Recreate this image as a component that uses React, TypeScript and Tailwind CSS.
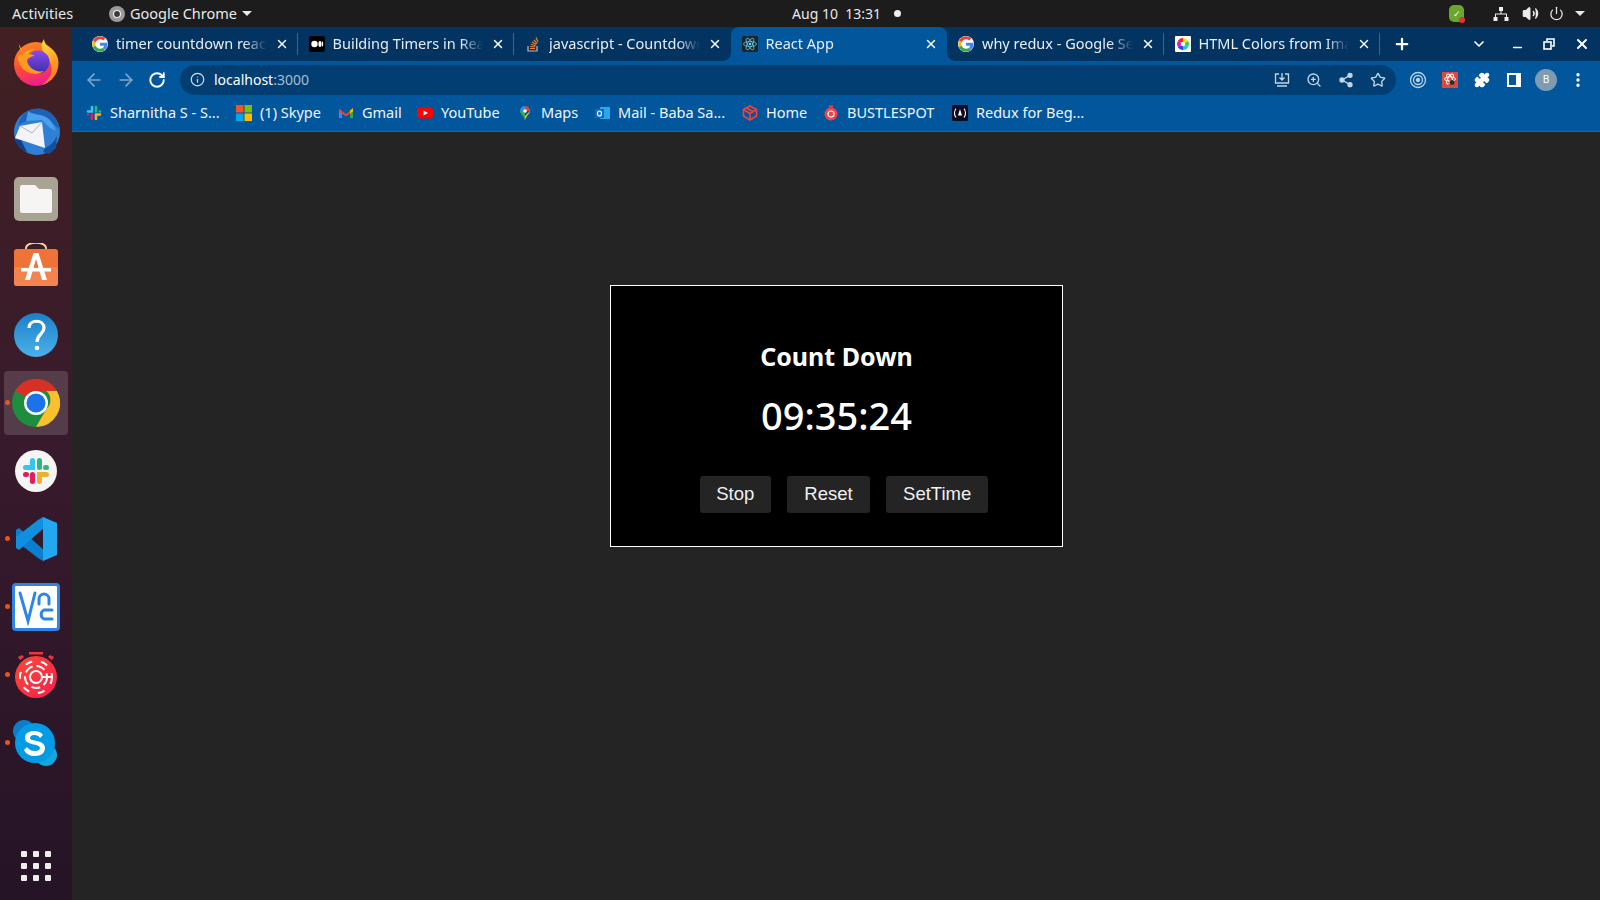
import { ArrowLeft, ArrowRight, RotateCw, Info, X, Plus, ChevronDown, Minus, Star, Share2, ZoomIn, EllipsisVertical, Puzzle, Volume2, Power } from 'lucide-react';

const sans = "font-['Noto_Sans','Open_Sans',sans-serif]";

function GoogleIcon() {
  return (
    <svg viewBox="0 0 48 48" className="w-4 h-4 shrink-0 bg-white rounded-full">
      <path fill="#ea4335" d="M24 9.500c3.900 0 7 1.400 9.500 3.700l6.600-6.600C36 2.800 30.500.5 24 .5 14.800.5 6.900 5.800 3 13.500l7.700 6C12.600 13.700 17.800 9.500 24 9.500z" />
      <path fill="#4285f4" d="M46.500 24.500c0-1.600-.1-3.100-.4-4.500H24v9h12.700c-.6 2.900-2.200 5.400-4.700 7l7.300 5.700c4.300-4 7.200-9.900 7.200-17.200z" />
      <path fill="#fbbc05" d="M10.700 28.500c-.5-1.400-.7-2.900-.7-4.500s.3-3.100.7-4.500l-7.700-6C1.400 16.700.5 20.200.5 24s.9 7.300 2.500 10.500l7.700-6z" />
      <path fill="#34a853" d="M24 47.500c6.500 0 11.900-2.100 15.300-5.800L32 36c-2 1.400-4.600 2.200-8 2.200-6.200 0-11.400-4.200-13.300-9.700l-7.700 6C6.900 42.200 14.800 47.500 24 47.500z" />
    </svg>
  );
}

function MediumIcon() {
  return (
    <svg viewBox="0 0 16 16" className="w-4 h-4 shrink-0">
      <rect width="16" height="16" rx="2" fill="#000" />
      <ellipse cx="5.500" cy="8" rx="3.200" ry="3.300" fill="#fff" />
      <ellipse cx="11" cy="8" rx="1.600" ry="3" fill="#fff" />
      <ellipse cx="13.600" cy="8" rx=".6" ry="2.700" fill="#fff" />
    </svg>
  );
}

function StackIcon() {
  return (
    <svg viewBox="0 0 16 16" className="w-4 h-4 shrink-0" fill="none">
      <path d="M3 10v5h9v-5" stroke="#bcbbbb" strokeWidth="1.200" />
      <path d="M5 12.500h5M5.200 10.500l5 .5M5.800 8.300l4.800 1.500M7 6l4.300 2.600M8.800 3.800l3.400 3.900M11 1.500l2 4.500" stroke="#f48024" strokeWidth="1.200" />
    </svg>
  );
}

function ReactIcon() {
  return (
    <svg viewBox="0 0 16 16" className="w-4 h-4 shrink-0">
      <rect width="16" height="16" rx="2" fill="#20232a" />
      <g fill="none" stroke="#61dafb" strokeWidth=".7">
        <ellipse cx="8" cy="8" rx="6.500" ry="2.500" />
        <ellipse cx="8" cy="8" rx="6.500" ry="2.500" transform="rotate(60 8 8)" />
        <ellipse cx="8" cy="8" rx="6.500" ry="2.500" transform="rotate(120 8 8)" />
      </g>
      <circle cx="8" cy="8" r="1.300" fill="#61dafb" />
    </svg>
  );
}

function ColorsIcon() {
  return (
    <svg viewBox="0 0 16 16" className="w-4 h-4 shrink-0">
      <rect width="16" height="16" rx="1" fill="#fff" />
      <path d="M8 8V2a6 6 0 0 1 5.200 3z" fill="#f5e50a" />
      <path d="M8 8l5.200-3a6 6 0 0 1 0 6z" fill="#2fd14a" />
      <path d="M8 8l5.200 3A6 6 0 0 1 8 14z" fill="#18c9d8" />
      <path d="M8 8v6a6 6 0 0 1-5.200-3z" fill="#2a45e8" />
      <path d="M8 8l-5.200 3a6 6 0 0 1 0-6z" fill="#c91fd6" />
      <path d="M8 8L2.800 5A6 6 0 0 1 8 2z" fill="#ee2424" />
      <circle cx="8" cy="8" r="2.200" fill="#fff" />
    </svg>
  );
}

function SlackSmall() {
  return (
    <svg viewBox="0 0 16 16" className="w-4 h-4 shrink-0" fill="none" strokeWidth="2.600" strokeLinecap="round">
      <path d="M6 2v4.500H2" stroke="#36c5f0" />
      <path d="M10 2v4.500M14 6.500h-.2" stroke="#2eb67d" />
      <path d="M10 14V9.500h4" stroke="#ecb22e" />
      <path d="M6 14V9.500M2 9.500h.2" stroke="#e01e5a" />
    </svg>
  );
}

function WindowsIcon() {
  return (
    <svg viewBox="0 0 16 16" className="w-4 h-4 shrink-0">
      <rect width="7.500" height="7.500" fill="#f35325" />
      <rect x="8.500" width="7.500" height="7.500" fill="#81bc06" />
      <rect y="8.500" width="7.500" height="7.500" fill="#05a6f0" />
      <rect x="8.500" y="8.500" width="7.500" height="7.500" fill="#ffba08" />
    </svg>
  );
}

function GmailIcon() {
  return (
    <svg viewBox="0 0 16 16" className="w-4 h-4 shrink-0">
      <path d="M1 4v9h3V7z" fill="#4285f4" />
      <path d="M15 4v9h-3V7z" fill="#34a853" />
      <path d="M1 3.500 8 9l7-5.500v3L8 11.500 1 6.500z" fill="#ea4335" />
      <path d="M12 5.500 15 3v3.500l-3 2z" fill="#fbbc05" />
    </svg>
  );
}

function YoutubeIcon() {
  return (
    <svg viewBox="0 0 16 16" className="w-4 h-4 shrink-0">
      <rect y="2.500" width="16" height="11" rx="3" fill="#ff0000" />
      <path d="M6.500 5.500v5L11 8z" fill="#fff" />
    </svg>
  );
}

function MapsIcon() {
  return (
    <svg viewBox="0 0 16 16" className="w-4 h-4 shrink-0">
      <path d="M8 1a5 5 0 0 0-5 5l5 0z" fill="#4285f4" />
      <path d="M8 1a5 5 0 0 1 5 5H8z" fill="#ea4335" />
      <path d="M13 6c0 2.500-3 4-5 9l-1-3z" fill="#fbbc05" />
      <path d="M3 6c0 2.500 3 4 5 9V6z" fill="#34a853" />
      <circle cx="8" cy="6" r="1.800" fill="#fff" />
    </svg>
  );
}

function OutlookIcon() {
  return (
    <svg viewBox="0 0 16 16" className="w-4 h-4 shrink-0">
      <rect x="6" y="2" width="10" height="12" fill="#28a8ea" />
      <rect x="1" y="4" width="9" height="9" fill="#0f6cbd" />
      <ellipse cx="5.500" cy="8.500" rx="2" ry="2.500" fill="none" stroke="#fff" strokeWidth="1.200" />
    </svg>
  );
}

function HomeCubeIcon() {
  return (
    <svg viewBox="0 0 16 16" className="w-4 h-4 shrink-0" fill="none" stroke="#f0403f" strokeWidth="1.600">
      <path d="M8 1 14.500 4.500v6.500L8 15 1.500 11V4.500z" />
      <path d="M1.500 4.500 8 8.500l6.500-4M8 8.500V15M4.500 3l6.500 3.500" />
    </svg>
  );
}

function BustleIcon() {
  return (
    <svg viewBox="0 0 16 16" className="w-4 h-4 shrink-0">
      <path d="M6 .5h4v2H6z" fill="#f0414c" />
      <circle cx="8" cy="9" r="6.500" fill="#f0414c" />
      <circle cx="8" cy="9" r="3" fill="none" stroke="#fff" strokeWidth="1.200" />
    </svg>
  );
}

function FreeCodeIcon() {
  return (
    <svg viewBox="0 0 16 16" className="w-4 h-4 shrink-0" fill="none" stroke="#fff" strokeWidth="1.100">
      <rect width="16" height="16" rx="1" fill="#0a0a23" stroke="none" />
      <path d="M4 3.500C2 6 2 10 4 12.500M12 3.500c2 2.500 2 6.500 0 9" />
      <path d="M8 4 6 10.500h4z" fill="#fff" stroke="none" />
    </svg>
  );
}

const tabs = [
  { title: 'timer countdown react', icon: <GoogleIcon />, active: false, sep: true },
  { title: 'Building Timers in React', icon: <MediumIcon />, active: false, sep: true },
  { title: 'javascript - Countdown', icon: <StackIcon />, active: false, sep: false },
  { title: 'React App', icon: <ReactIcon />, active: true, sep: false },
  { title: 'why redux - Google Search', icon: <GoogleIcon />, active: false, sep: true },
  { title: 'HTML Colors from Image', icon: <ColorsIcon />, active: false, sep: true },
];

function TabStrip() {
  return (
    <div className="h-[34px] bg-[#023361] flex items-end pl-[9px] shrink-0">
      {tabs.map((tab) => (
        <div
          key={tab.title}
          className={`relative h-[34px] w-[216.500px] flex items-center pl-[11px] pr-[9px] gap-[8px] rounded-t-[8px] ${
            tab.active ? 'bg-[#02569b]' : ''
          }`}
        >
          {tab.active && (
            <>
              <div className="absolute bottom-0 left-[-8px] w-[8px] h-[8px] bg-[radial-gradient(circle_at_0_0,#023361_7.500px,#02569b_8px)]" />
              <div className="absolute bottom-0 right-[-8px] w-[8px] h-[8px] bg-[radial-gradient(circle_at_100%_0,#023361_7.500px,#02569b_8px)]" />
            </>
          )}
          {tab.icon}
          <span className="flex-1 overflow-hidden whitespace-nowrap text-[14.500px] text-[#e6edf4] [mask-image:linear-gradient(to_right,black_85%,transparent)]">
            {tab.title}
          </span>
          <X size={14} strokeWidth={2.500} className="text-white shrink-0" />
          {tab.sep && <div className="absolute right-0 top-[6px] w-px h-[22px] bg-[#3a6690]" />}
        </div>
      ))}
      <div className="h-[34px] w-[43px] flex items-center justify-center">
        <Plus size={18} strokeWidth={3} className="text-white" />
      </div>
      <div className="flex-1 h-[34px] flex items-center justify-end pr-[1px] text-white">
        <div className="w-[32px] flex justify-center">
          <ChevronDown size={16} strokeWidth={2.500} />
        </div>
        <div className="w-[30px] ml-[7px] mr-[1px] flex justify-center">
          <Minus size={13} strokeWidth={3} className="mt-[6px]" />
        </div>
        <div className="w-[32px] flex justify-center">
          <svg viewBox="0 0 12 12" className="w-3 h-3" fill="none" stroke="#fff" strokeWidth="1.600">
            <rect x="1" y="4" width="7" height="7" />
            <path d="M4 3V1h7v7H9" />
          </svg>
        </div>
        <div className="w-[34px] flex justify-center">
          <X size={16} strokeWidth={3} />
        </div>
      </div>
    </div>
  );
}

function Toolbar() {
  return (
    <div className="h-[34px] bg-[#02569b] flex items-center pt-[3px] shrink-0">
      <div className="w-[108px] flex items-center pl-[12px] gap-[12px]">
        <ArrowLeft size={20} className="text-[#7ea6cc]" />
        <ArrowRight size={20} className="text-[#7ea6cc]" />
        <RotateCw size={18} strokeWidth={2.500} className="text-white" />
      </div>
      <div className="w-[1216px] h-[30px] rounded-full bg-[#033e72] flex items-center pl-[10px] pr-[10px]">
        <Info size={15} className="text-[#d5e0eb]" />
        <span className="ml-[9px] text-[14px] text-white">
          localhost<span className="text-[#a3bdd6]">:3000</span>
        </span>
        <div className="ml-auto flex items-center gap-[16px] text-[#c4d5e5]">
          <svg viewBox="0 0 16 16" className="w-4 h-4" fill="none" stroke="currentColor" strokeWidth="1.300">
            <path d="M5 2H1.500v9h13V2H11M8 1v7M5.500 5.500 8 8l2.500-2.500M3 14h10" />
          </svg>
          <ZoomIn size={16} />
          <Share2 size={16} fill="currentColor" />
          <Star size={16} strokeWidth={2} />
        </div>
      </div>
      <div className="flex-1 flex items-center pl-[6px] text-white">
        <div className="w-[32px] flex justify-center">
          <svg viewBox="0 0 18 18" className="w-[18px] h-[18px]" fill="none" stroke="#bcd0e3" strokeWidth="1.300">
            <circle cx="9" cy="9" r="7.500" />
            <circle cx="9" cy="9" r="4.500" />
            <circle cx="9" cy="9" r="1.500" fill="#bcd0e3" />
          </svg>
        </div>
        <div className="w-[32px] flex justify-center">
          <svg viewBox="0 0 16 16" className="w-4 h-4">
            <rect width="16" height="16" fill="#dc4a3d" />
            <g fill="none" stroke="#fff" strokeWidth=".9">
              <ellipse cx="8" cy="7" rx="5.500" ry="2.200" />
              <ellipse cx="8" cy="7" rx="5.500" ry="2.200" transform="rotate(60 8 7)" />
              <ellipse cx="8" cy="7" rx="5.500" ry="2.200" transform="rotate(120 8 7)" />
            </g>
            <circle cx="10" cy="10.500" r="2.500" fill="#3a2a2a" />
          </svg>
        </div>
        <div className="w-[32px] flex justify-center">
          <Puzzle size={16} fill="#fff" />
        </div>
        <div className="w-[32px] flex justify-center">
          <svg viewBox="0 0 14 14" className="w-[14px] h-[14px]">
            <path d="M0 0h14v14H0zM2 2v10h7V2z" fill="#fff" fillRule="evenodd" />
          </svg>
        </div>
        <div className="w-[32px] flex justify-center">
          <div className="w-[22px] h-[22px] rounded-full bg-[#7f9bb2] flex items-center justify-center text-[10px] text-white">
            B
          </div>
        </div>
        <div className="w-[32px] flex justify-center">
          <EllipsisVertical size={18} strokeWidth={2.500} />
        </div>
      </div>
    </div>
  );
}

const bookmarks = [
  { label: 'Sharnitha S - S...', icon: <SlackSmall />, width: 'w-[150px]' },
  { label: '(1) Skype', icon: <WindowsIcon />, width: 'w-[102px]' },
  { label: 'Gmail', icon: <GmailIcon />, width: 'w-[79px]' },
  { label: 'YouTube', icon: <YoutubeIcon />, width: 'w-[100px]' },
  { label: 'Maps', icon: <MapsIcon />, width: 'w-[77px]' },
  { label: 'Mail - Baba Sa...', icon: <OutlookIcon />, width: 'w-[148px]' },
  { label: 'Home', icon: <HomeCubeIcon />, width: 'w-[81px]' },
  { label: 'BUSTLESPOT', icon: <BustleIcon />, width: 'w-[129px]' },
  { label: 'Redux for Beg...', icon: <FreeCodeIcon />, width: 'w-[130px]' },
];

function BookmarkBar() {
  return (
    <div className="h-[37px] bg-[#02569b] border-b border-[#3f5f7c] flex items-center pl-[14px] shrink-0">
      {bookmarks.map((b) => (
        <div key={b.label} className={`${b.width} shrink-0 flex items-center gap-[8px]`}>
          {b.icon}
          <span className="text-[14.500px] text-[#f1f5f9] whitespace-nowrap">{b.label}</span>
        </div>
      ))}
    </div>
  );
}

function DockItem({ children, running, active }: { children: React.ReactNode; running?: boolean; active?: boolean }) {
  return (
    <div className="relative h-[68px] w-[72px] flex items-center justify-center">
      {active && <div className="absolute left-[4px] top-[2px] w-[64px] h-[64px] rounded-[4px] bg-white/15" />}
      {running && <div className="absolute left-[5px] top-[31px] w-[5px] h-[5px] rounded-full bg-[#e95420]" />}
      <div className="relative w-[48px] h-[48px]">{children}</div>
    </div>
  );
}

function Dock() {
  return (
    <div className="w-[72px] shrink-0 flex flex-col pt-[2px] bg-gradient-to-b from-[#422022] via-[#371a2c] to-[#251426]">
      <DockItem>
        <svg viewBox="0 0 48 48" className="w-full h-full">
          <defs>
            <linearGradient id="ff" x1="0.2" y1="0" x2="0.5" y2="1">
              <stop offset="0" stopColor="#ff8a1c" />
              <stop offset="0.55" stopColor="#ff4a3a" />
              <stop offset="1" stopColor="#ee1a92" />
            </linearGradient>
            <linearGradient id="ffy" x1="0" y1="0" x2="0.4" y2="1">
              <stop offset="0" stopColor="#ffe53a" />
              <stop offset="1" stopColor="#ff7a1a" />
            </linearGradient>
            <linearGradient id="ffp" x1="0.5" y1="0" x2="0.5" y2="1">
              <stop offset="0" stopColor="#8a4af0" />
              <stop offset="1" stopColor="#3a2fa8" />
            </linearGradient>
          </defs>
          <circle cx="24" cy="25" r="22" fill="url(#ff)" />
          <path d="M32 0c0 6 6 8 10 12 5 6 5 12 4 17-2 9-9 15-16 17 7-5 11-11 9-20-1-6-7-11-9-16-1-4 0-7 2-10z" fill="url(#ffy)" />
          <path d="M7 5c0 4 2 7 5 9 3-2 7-4 12-4-5 1-9 5-11 8z" fill="#ffb01f" />
          <circle cx="26" cy="23" r="11.500" fill="url(#ffp)" />
          <path d="M6 17c6-3 12-3 17 0-4 0-6 2-8 4 1 8 9 13 17 11-8 6-19 2-24-6-2-3-2-6-2-9z" fill="#ff9a1f" />
        </svg>
      </DockItem>
      <DockItem>
        <svg viewBox="0 0 48 48" className="w-full h-full">
          <circle cx="25" cy="25" r="23" fill="#2f7fd4" />
          <path d="M6 18C9 6 18 0 30 2c10 2 16 10 17 20l-9-8-12-2-14 3z" fill="#1c63b8" />
          <path d="M16 4c5 4 12 3 18 6 5 3 8 8 10 14l-6-3-8-8-16 1z" fill="#4aa0ea" />
          <path d="M33 41c5-2 9-6 12-12l-1 12-7 6-6-2z" fill="#15509f" />
          <path d="M2 32c3 7 8 12 13 13l-6-12z" fill="#123f8a" />
          <path d="M8 19 30 15l3 26L3 31z" fill="#f4f4f8" />
          <path d="M8 19l12 7 10-11" fill="none" stroke="#aeb3c5" strokeWidth="1" />
        </svg>
      </DockItem>
      <DockItem>
        <div className="absolute left-[2px] top-[2px] w-[44px] h-[44px] rounded-[5px] bg-[#a8a392] flex items-center justify-center">
          <svg viewBox="0 0 32 28" className="w-[32px] h-[28px]">
            <path d="M2 0h13l4 4h11a2 2 0 0 1 2 2v20a2 2 0 0 1-2 2H2a2 2 0 0 1-2-2V2a2 2 0 0 1 2-2z" fill="#f6f5f4" />
          </svg>
        </div>
      </DockItem>
      <DockItem>
        <svg viewBox="0 0 48 48" className="w-full h-full">
          <path d="M14 7V5c0-7 20-7 20 0v2" fill="none" stroke="#fad7a0" strokeWidth="1.800" />
          <rect x="2" y="6" width="44" height="37" rx="3" fill="#ef7339" />
          <rect x="2" y="24" width="44" height="19" rx="3" fill="#f38450" />
          <path d="M21.500 10h5L35 37h-5l-6-21-6 21h-5z" fill="#fff" />
          <rect x="9" y="25" width="30" height="3.500" fill="#fff" />
        </svg>
      </DockItem>
      <DockItem>
        <svg viewBox="0 0 48 48" className="w-full h-full">
          <defs>
            <linearGradient id="help" x1="0" y1="0" x2="0" y2="1">
              <stop offset="0" stopColor="#1c7fc9" />
              <stop offset="1" stopColor="#4bb1e9" />
            </linearGradient>
          </defs>
          <circle cx="24" cy="24" r="22" fill="url(#help)" />
          <path d="M17 17c0-9 15-9 15 0 0 6-7 6-7 14" fill="none" stroke="#fff" strokeWidth="3.200" />
          <circle cx="25" cy="37" r="2.300" fill="#fff" />
        </svg>
      </DockItem>
      <DockItem running active>
        <svg viewBox="0 0 48 48" className="w-full h-full">
          <circle cx="24" cy="24" r="24" fill="#1e8e3e" />
          <path d="M24 0a24 24 0 0 1 20.800 12H24a12 12 0 0 0-10.400 6L3.200 12A24 24 0 0 1 24 0z" fill="#d93025" />
          <path d="M44.800 12A24 24 0 0 1 24 48l10.400-18a12 12 0 0 0 0-18z" fill="#fbc02d" />
          <circle cx="24" cy="24" r="12" fill="#fff" />
          <circle cx="24" cy="24" r="9.500" fill="#1a73e8" />
        </svg>
      </DockItem>
      <DockItem>
        <div className="absolute left-[3px] top-[3px] w-[42px] h-[42px] rounded-full bg-[#f5f5f5] flex items-center justify-center">
          <svg viewBox="0 0 28 28" className="w-[28px] h-[28px]" fill="none" strokeWidth="5" strokeLinecap="round">
            <path d="M10.500 3.500v7h-7" stroke="#36c5f0" />
            <path d="M17.500 3.500v7M24.500 10.500h-1" stroke="#2eb67d" />
            <path d="M17.500 24.500v-7h7" stroke="#ecb22e" />
            <path d="M10.500 24.500v-7M3.500 17.500h1" stroke="#e01e5a" />
          </svg>
        </div>
      </DockItem>
      <DockItem running>
        <svg viewBox="0 0 48 48" className="w-full h-full">
          <path d="M4 15 7 13l26 23-2 10-5-3L4 26z" fill="#0a7ed0" />
          <path d="M4 33 7 35l26-23-2-10-5 3L4 22z" fill="#0f8fde" />
          <path d="M31 2 45 8v32l-14 6z" fill="#22a7f0" />
        </svg>
      </DockItem>
      <DockItem running>
        <div className="absolute left-0 top-0 w-[48px] h-[48px] rounded-[4px] border-[3px] border-[#2f85e6] bg-white">
          <svg viewBox="0 0 42 42" className="w-full h-full" fill="none" stroke="#2f85e6" strokeWidth="3" strokeLinecap="round">
            <path d="M5 7l8 28 7-28" />
            <path d="M24 18v-5a5 5 0 0 1 10 0v5" />
            <path d="M37 24h-8a5 5 0 0 0 0 9h8" />
          </svg>
        </div>
      </DockItem>
      <DockItem running>
        <svg viewBox="0 0 48 48" className="w-full h-full">
          <defs>
            <linearGradient id="tm" x1="0" y1="0" x2="1" y2="1">
              <stop offset="0" stopColor="#fb4a35" />
              <stop offset="1" stopColor="#f51f4e" />
            </linearGradient>
          </defs>
          <path d="M17 1h14v2.500H17zM6 6l4-2 2 2-4 3zM42 6l-4-2-2 2 4 3z" fill="#f5333f" />
          <circle cx="24" cy="26" r="21" fill="url(#tm)" />
          <g fill="none" stroke="#fff" strokeWidth="2">
            <circle cx="24" cy="26" r="6" />
            <circle cx="24" cy="26" r="11" strokeDasharray="9 4" />
            <circle cx="24" cy="26" r="16" strokeDasharray="7 9" />
            <path d="M30 26h11" />
          </g>
        </svg>
      </DockItem>
      <DockItem running>
        <svg viewBox="0 0 48 48" className="w-full h-full">
          <circle cx="12" cy="12" r="11" fill="#0e7cc9" />
          <circle cx="34" cy="36" r="11" fill="#16a5dc" />
          <circle cx="23" cy="24" r="20" fill="#039be5" />
          <path d="M31 16c-2-3-5-4-9-4-5 0-9 2-9 7 0 8 15 5 15 10 0 2-2 3-5 3s-6-1-8-4l-3 3c2 4 6 6 11 6 6 0 10-3 10-8 0-9-15-6-15-10 0-2 2-3 4-3 3 0 5 1 6 3z" fill="#fff" />
        </svg>
      </DockItem>
      <div className="mt-auto pb-[19px] flex justify-center">
        <div className="grid grid-cols-3 gap-x-[6px] gap-y-[6px]">
          {Array.from({ length: 9 }).map((_, i) => (
            <div key={i} className="w-[6px] h-[6px] rounded-[1px] bg-[#eeeeec]" />
          ))}
        </div>
      </div>
    </div>
  );
}

function TimerCard() {
  return (
    <div className="w-[453px] h-[262px] ml-[538px] mt-[153px] bg-black border border-white flex flex-col items-center">
      <h1 className="mt-[52px] h-[36px] text-[25px] leading-[36px] font-bold text-white">Count Down</h1>
      <div className="mt-[16px] h-[50px] text-[38px] leading-[50px] font-medium text-white">09:35:24</div>
      <div className="mt-[36px] ml-[15px] flex gap-[16px] font-['Liberation_Sans',sans-serif]">
        <button className="h-[37px] px-[16.500px] pb-[1px] rounded-[3px] bg-[#242424] text-[18.500px] text-[#f0f0f0]">Stop</button>
        <button className="h-[37px] px-[17.500px] pb-[1px] rounded-[3px] bg-[#242424] text-[18.500px] text-[#f0f0f0]">Reset</button>
        <button className="h-[37px] px-[17px] pb-[1px] rounded-[3px] bg-[#242424] text-[18.500px] text-[#f0f0f0]">SetTime</button>
      </div>
    </div>
  );
}

function TopBar() {
  return (
    <div className="h-[27px] bg-[#1c1c1c] flex items-center text-[14.500px] text-[#e8e8e8] shrink-0">
      <span className="ml-[12px] w-[97px] tracking-[0.1px]">Activities</span>
      <svg viewBox="0 0 16 16" className="w-4 h-4">
        <circle cx="8" cy="8" r="8" fill="#9a9a9a" />
        <circle cx="8" cy="8" r="3.500" fill="#3a3a3a" stroke="#eee" strokeWidth="1.200" />
      </svg>
      <span className="ml-[5px]">Google Chrome</span>
      <div className="ml-[5px] w-0 h-0 border-l-[5px] border-r-[5px] border-t-[5px] border-l-transparent border-r-transparent border-t-[#e8e8e8]" />
      <span className="ml-[540px] text-[14px]">Aug 10&nbsp;&nbsp;13:31</span>
      <div className="ml-[13px] w-[7px] h-[7px] rounded-full bg-[#eeeeee]" />
      <div className="ml-auto flex items-center">
        <div className="relative w-[15px] h-[17px] rounded-[5px] bg-[#6aa62b] flex items-center justify-center text-[9px] text-white leading-none">
          ✓
          <div className="absolute right-[-1px] bottom-[-1px] w-[6px] h-[6px] rounded-full bg-[#e8303a]" />
        </div>
        <svg viewBox="0 0 16 16" className="ml-[29px] w-4 h-4" fill="#eee">
          <path d="M6 1h4v4H8.500v2.500H14V11h1.500v4h-4v-4H13V8.500H3V11h1.500v4h-4v-4H2V7.500h5.500V5H6z" />
        </svg>
        <Volume2 size={17} fill="#eee" className="ml-[13px]" />
        <Power size={15} className="ml-[10px]" />
        <div className="ml-[11px] mr-[15px] w-0 h-0 border-l-[5px] border-r-[5px] border-t-[5px] border-l-transparent border-r-transparent border-t-[#e8e8e8]" />
      </div>
    </div>
  );
}

export default function App() {
  return (
    <div className={`w-[1600px] h-[900px] flex flex-col overflow-hidden bg-[#242424] ${sans}`}>
      <TopBar />
      <div className="flex-1 flex min-h-0">
        <Dock />
        <div className="flex-1 flex flex-col min-w-0">
          <TabStrip />
          <Toolbar />
          <BookmarkBar />
          <TimerCard />
        </div>
      </div>
    </div>
  );
}
